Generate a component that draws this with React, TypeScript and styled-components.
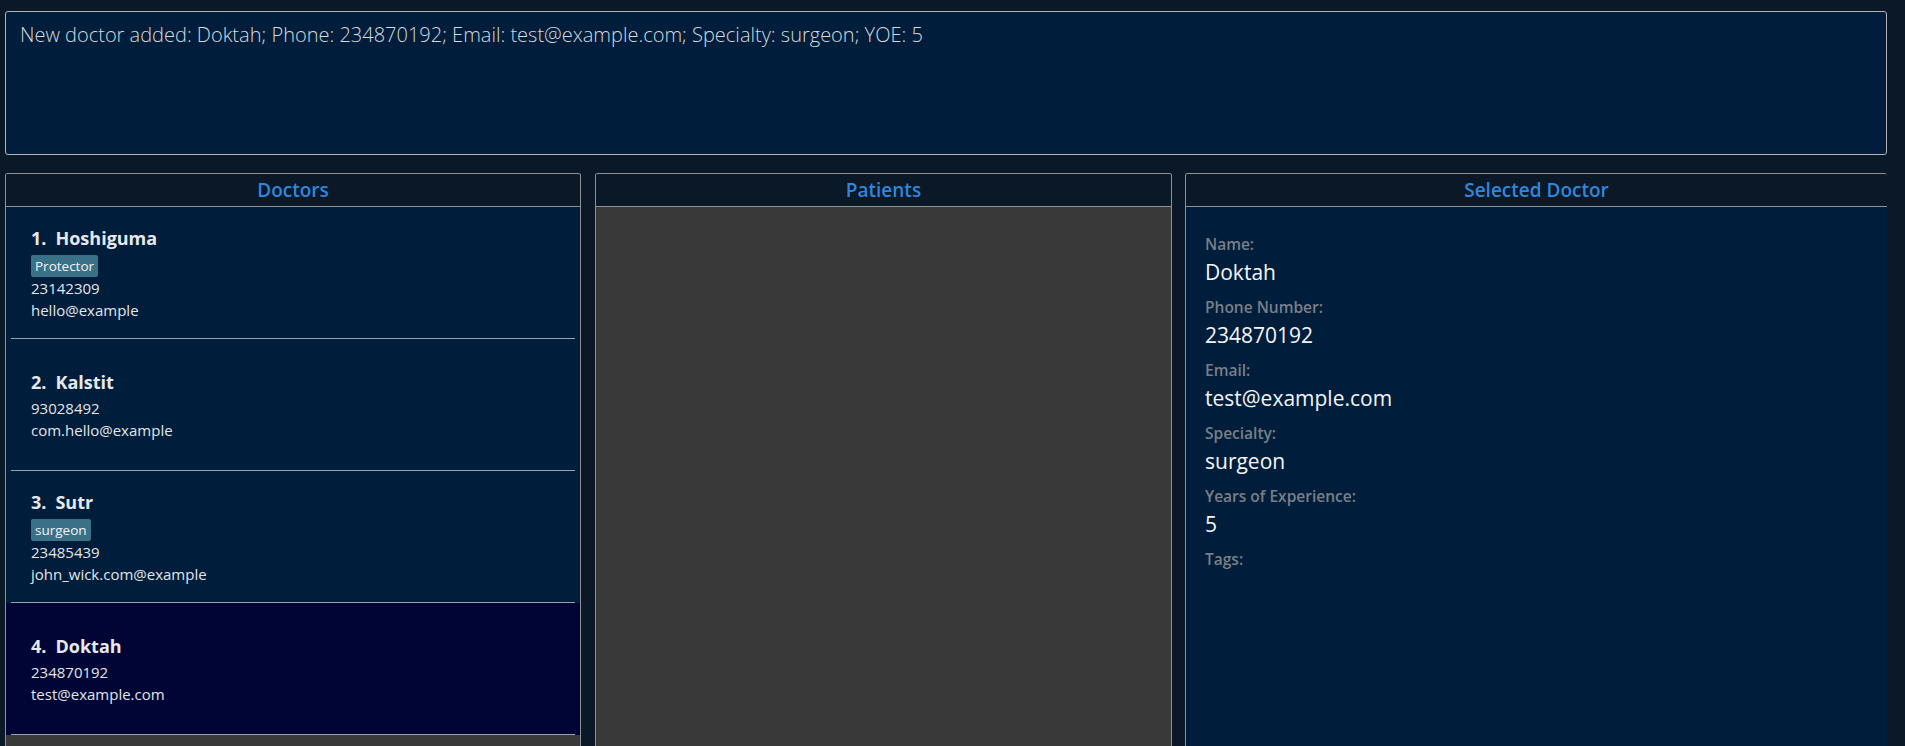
import React from "react";
import styled, { createGlobalStyle } from "styled-components";

const GlobalStyle = createGlobalStyle`
  html, body {
    margin: 0;
    padding: 0;
    background: #0b1828;
    overflow: hidden;
  }
  * { box-sizing: border-box; }
`;

const Page = styled.div`
  height: 746px;
  padding: 11px 18px 0 5px;
  display: flex;
  flex-direction: column;
  font-family: "Open Sans", "Noto Sans", sans-serif;
  overflow: hidden;
`;

const ResultBox = styled.div`
  flex: 0 0 144px;
  background: #001e3c;
  border: 1px solid #b4b4b4;
  border-radius: 3px;
  padding: 9px 14px;
  color: #d6d9dd;
  font-size: 20px;
  font-weight: 300;
  line-height: normal;
`;

const PanelRow = styled.div`
  flex: 1;
  display: flex;
  margin-top: 18px;
  min-height: 0;
`;

const Panel = styled.section<{ $width?: number; $gapLeft?: number; $noRight?: boolean }>`
  flex: ${(p) => (p.$width ? `0 0 ${p.$width}px` : "1")};
  margin-left: ${(p) => p.$gapLeft ?? 0}px;
  display: flex;
  flex-direction: column;
  border: 1px solid #8e9296;
  border-bottom: none;
  border-right: ${(p) => (p.$noRight ? "none" : "1px solid #8e9296")};
  border-radius: 3px 3px 0 0;
  overflow: hidden;
  min-height: 0;
`;

const PanelHeader = styled.header`
  flex: 0 0 33px;
  background: #0a1827;
  border-bottom: 1px solid #8e9296;
  color: #2f87db;
  font-size: 19px;
  font-weight: 600;
  line-height: 32px;
  text-align: center;
`;

const ListBody = styled.div`
  flex: 1;
  background: #393939;
  display: flex;
  flex-direction: column;
`;

const Cell = styled.div<{ $selected?: boolean }>`
  background: ${(p) => (p.$selected ? "#000535" : "#001e3c")};
  padding: 0 5px;
`;

const CellInner = styled.div`
  height: 132px;
  padding: 2px 0 0 20px;
  border-bottom: 1px solid #9ca1a6;
  display: flex;
  flex-direction: column;
  justify-content: center;
`;

const NameLine = styled.div`
  display: flex;
  gap: 9px;
  color: #e6e8eb;
  font-size: 18px;
  font-weight: 700;
  line-height: 24px;
  margin-bottom: 3px;
`;

const TagRow = styled.div`
  display: flex;
  gap: 4px;
  margin-top: 2px;
`;

const Tag = styled.span`
  background: #3a7188;
  color: #f2f4f6;
  border-radius: 2px;
  padding: 0 4px;
  font-size: 13.5px;
  line-height: 22px;
`;

const InfoLine = styled.div`
  color: #e3e5e8;
  font-size: 15px;
  line-height: 22px;
`;

const DetailBody = styled.div`
  flex: 1;
  background: #001e3c;
  padding: 27px 19px 0;
`;

const Field = styled.div`
  margin-bottom: 11px;
`;

const FieldLabel = styled.div`
  color: #7a7f85;
  font-size: 15.5px;
  font-weight: 600;
  line-height: 20px;
  margin-bottom: 4px;
`;

const FieldValue = styled.div`
  color: #f4f5f7;
  font-size: 21px;
  line-height: 28px;
`;

type Doctor = { id: number; name: string; tags: string[]; phone: string; email: string };

const doctors: Doctor[] = [
  { id: 1, name: "Hoshiguma", tags: ["Protector"], phone: "23142309", email: "hello@example" },
  { id: 2, name: "Kalstit", tags: [], phone: "93028492", email: "com.hello@example" },
  { id: 3, name: "Sutr", tags: ["surgeon"], phone: "23485439", email: "john_wick.com@example" },
  { id: 4, name: "Doktah", tags: [], phone: "234870192", email: "test@example.com" },
];

const details: [string, string][] = [
  ["Name:", "Doktah"],
  ["Phone Number:", "234870192"],
  ["Email:", "test@example.com"],
  ["Specialty:", "surgeon"],
  ["Years of Experience:", "5"],
];

export default function App() {
  return (
    <>
      <GlobalStyle />
      <Page>
        <ResultBox>
          New doctor added: Doktah; Phone: 234870192; Email: test@example.com; Specialty: surgeon; YOE: 5
        </ResultBox>
        <PanelRow>
          <Panel $width={576}>
            <PanelHeader>Doctors</PanelHeader>
            <ListBody>
              {doctors.map((d) => (
                <Cell key={d.id} $selected={d.id === 4}>
                  <CellInner>
                    <NameLine>
                      <span>{d.id}.</span>
                      <span>{d.name}</span>
                    </NameLine>
                    {d.tags.length > 0 && (
                      <TagRow>
                        {d.tags.map((t) => (
                          <Tag key={t}>{t}</Tag>
                        ))}
                      </TagRow>
                    )}
                    <InfoLine>{d.phone}</InfoLine>
                    <InfoLine>{d.email}</InfoLine>
                  </CellInner>
                </Cell>
              ))}
            </ListBody>
          </Panel>
          <Panel $width={577} $gapLeft={14}>
            <PanelHeader>Patients</PanelHeader>
            <ListBody />
          </Panel>
          <Panel $gapLeft={13} $noRight>
            <PanelHeader>Selected Doctor</PanelHeader>
            <DetailBody>
              {details.map(([label, value]) => (
                <Field key={label}>
                  <FieldLabel>{label}</FieldLabel>
                  <FieldValue>{value}</FieldValue>
                </Field>
              ))}
              <Field>
                <FieldLabel>Tags:</FieldLabel>
              </Field>
            </DetailBody>
          </Panel>
        </PanelRow>
      </Page>
    </>
  );
}
